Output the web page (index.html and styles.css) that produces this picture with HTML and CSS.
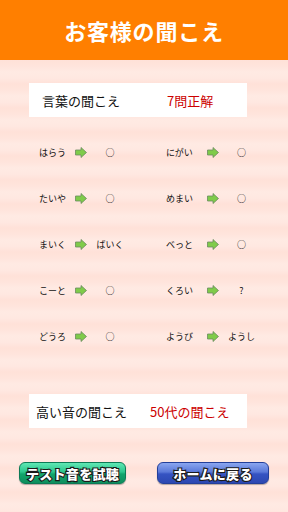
FILE: index.html
```html
<!DOCTYPE html>
<html lang="ja">
<head>
<meta charset="utf-8">
<link rel="stylesheet" href="styles.css">
</head>
<body>
<header class="header"><h1 class="title">お客様の聞こえ</h1></header>
<main class="content">
  <div class="card card-words">
    <span class="card-label">言葉の聞こえ</span>
    <span class="card-value">7問正解</span>
  </div>
  <div class="rows">
    <div class="item left"><span class="word">はらう</span><svg class="arrow" viewBox="0 0 12 11"><polygon points="0.5,3 6,3 6,0.5 11.5,5.5 6,10.5 6,8 0.5,8"/></svg><span class="result">○</span></div>
    <div class="item right"><span class="word">にがい</span><svg class="arrow" viewBox="0 0 12 11"><polygon points="0.5,3 6,3 6,0.5 11.5,5.5 6,10.5 6,8 0.5,8"/></svg><span class="result">○</span></div>
    <div class="item left"><span class="word">たいや</span><svg class="arrow" viewBox="0 0 12 11"><polygon points="0.5,3 6,3 6,0.5 11.5,5.5 6,10.5 6,8 0.5,8"/></svg><span class="result">○</span></div>
    <div class="item right"><span class="word">めまい</span><svg class="arrow" viewBox="0 0 12 11"><polygon points="0.5,3 6,3 6,0.5 11.5,5.5 6,10.5 6,8 0.5,8"/></svg><span class="result">○</span></div>
    <div class="item left"><span class="word">まいく</span><svg class="arrow" viewBox="0 0 12 11"><polygon points="0.5,3 6,3 6,0.5 11.5,5.5 6,10.5 6,8 0.5,8"/></svg><span class="result">ばいく</span></div>
    <div class="item right"><span class="word">べっと</span><svg class="arrow" viewBox="0 0 12 11"><polygon points="0.5,3 6,3 6,0.5 11.5,5.5 6,10.5 6,8 0.5,8"/></svg><span class="result">○</span></div>
    <div class="item left"><span class="word">こーと</span><svg class="arrow" viewBox="0 0 12 11"><polygon points="0.5,3 6,3 6,0.5 11.5,5.5 6,10.5 6,8 0.5,8"/></svg><span class="result">○</span></div>
    <div class="item right"><span class="word">くろい</span><svg class="arrow" viewBox="0 0 12 11"><polygon points="0.5,3 6,3 6,0.5 11.5,5.5 6,10.5 6,8 0.5,8"/></svg><span class="result">?</span></div>
    <div class="item left"><span class="word">どうろ</span><svg class="arrow" viewBox="0 0 12 11"><polygon points="0.5,3 6,3 6,0.5 11.5,5.5 6,10.5 6,8 0.5,8"/></svg><span class="result">○</span></div>
    <div class="item right"><span class="word">ようび</span><svg class="arrow" viewBox="0 0 12 11"><polygon points="0.5,3 6,3 6,0.5 11.5,5.5 6,10.5 6,8 0.5,8"/></svg><span class="result">ようし</span></div>
  </div>
  <div class="card card-high">
    <span class="card-label">高い音の聞こえ</span>
    <span class="card-value">50代の聞こえ</span>
  </div>
  <div class="buttons">
    <button class="btn btn-green">テスト音を試聴</button>
    <button class="btn btn-blue">ホームに戻る</button>
  </div>
</main>
</body>
</html>
```

FILE: styles.css
```css
* { box-sizing: border-box; }
html, body { margin: 0; padding: 0; }
body {
  width: 288px;
  height: 512px;
  overflow: hidden;
  font-family: "Noto Sans CJK JP", "Noto Sans", sans-serif;
  background-color: #ffe6de;
  background-image: repeating-linear-gradient(180deg,
    #ffeae3 0px, #ffe8e1 6px, #ffe1d8 12px, #ffe4dc 18px, #ffeae3 24px);
  color: #111;
}
.header {
  height: 60px;
  background: #ff7f00;
  display: flex;
  align-items: center;
  justify-content: center;
}
.title {
  margin: 0;
  color: #fff;
  font-size: 22px;
  font-weight: 700;
  letter-spacing: 0.8px;
  line-height: 1;
}
.content {
  display: flex;
  flex-direction: column;
}
.card {
  margin-left: 29px;
  width: 218px;
  height: 34px;
  background: #fff;
  display: flex;
  align-items: center;
  font-size: 13px;
  line-height: 1;
}
.card-words { margin-top: 23px; padding-left: 13px; }
.card-words .card-value { margin-left: 47px; }
.card-high { margin-top: 35px; padding-left: 7px; }
.card-high .card-value { margin-left: 23px; }
.card-label { color: #111; }
.card-value { color: #cc0000; }
.rows {
  margin-top: 12px;
  padding-left: 39px;
  display: grid;
  grid-template-columns: 127px 1fr;
  grid-auto-rows: 46px;
}
.item {
  display: flex;
  align-items: center;
  font-size: 9px;
  line-height: 1;
}
.word { width: 36px; }
.right .word { width: 41px; }
.arrow {
  width: 12px;
  height: 11px;
  fill: #7fcb4a;
  stroke: #6b8a5f;
  stroke-width: 0.8;
  stroke-linejoin: round;
}
.result { width: 46px; text-align: center; }
.right .result { width: 45px; }
.buttons {
  margin-top: 34px;
  display: flex;
  padding-left: 19px;
  gap: 31px;
}
.btn {
  height: 22px;
  border-radius: 6px;
  padding: 0;
  font-family: "Noto Sans CJK JP", sans-serif;
  font-size: 13px;
  font-weight: 900;
  color: #fff;
  letter-spacing: 0.3px;
  line-height: 1;
  -webkit-text-stroke: 2.2px #1a1a1a;
  paint-order: stroke fill;
  display: flex;
  align-items: center;
  justify-content: center;
}
.btn-green {
  width: 107px;
  border: 1px solid #0d7a56;
  background: linear-gradient(180deg, #5fe8b4 0%, #2cc58c 45%, #12a56c 55%, #0e8f5e 100%);
  box-shadow: 0 1px 1px rgba(0,0,0,0.3);
}
.btn-blue {
  width: 112px;
  border: 1px solid #233f9a;
  background: linear-gradient(180deg, #8aa6f0 0%, #5a78d8 45%, #3553c2 55%, #2c48b2 100%);
  box-shadow: 0 1px 1px rgba(0,0,0,0.3);
}
```
